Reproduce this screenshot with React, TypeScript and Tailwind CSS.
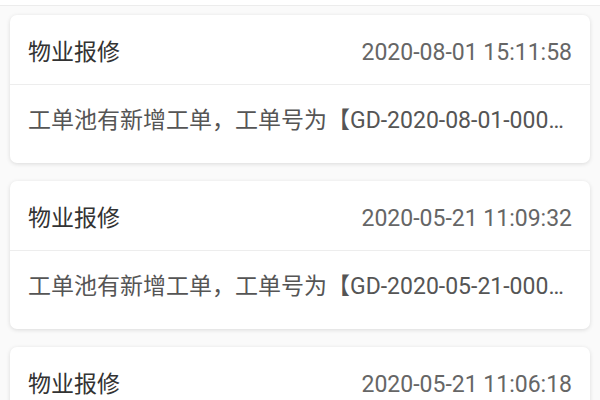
const notices = [
  {
    id: 1,
    title: "物业报修",
    time: "2020-08-01 15:11:58",
    content: "工单池有新增工单，工单号为【GD-2020-08-01-0001】，请及时处理",
  },
  {
    id: 2,
    title: "物业报修",
    time: "2020-05-21 11:09:32",
    content: "工单池有新增工单，工单号为【GD-2020-05-21-0002】，请及时处理",
  },
  {
    id: 3,
    title: "物业报修",
    time: "2020-05-21 11:06:18",
    content: "工单池有新增工单，工单号为【GD-2020-05-21-0001】，请及时处理",
  },
];

export default function App() {
  return (
    <div
      className="h-[400px] w-[600px] overflow-hidden bg-[#fafafa]"
      style={{ fontFamily: '"Roboto", "Noto Sans CJK SC", sans-serif' }}
    >
      <div className="h-[6px] border-b border-[#ececec] bg-white" />
      <div className="flex flex-col gap-[18px] px-[10px] pt-[9px]">
        {notices.map((notice) => (
          <div
            key={notice.id}
            className="shrink-0 overflow-hidden rounded-[7px] bg-white shadow-[0_1px_4px_rgba(0,0,0,0.13)]"
          >
            <div className="flex h-[70px] items-center justify-between border-b border-[#ededed] px-[18px] pt-[8px]">
              <span className="text-[23px] text-[#333]">{notice.title}</span>
              <span className="text-[23px] text-[#666]">{notice.time}</span>
            </div>
            <div className="flex h-[78px] items-center px-[18px] pb-[6px]">
              <p className="truncate text-[23px] text-[#555]">
                {notice.content}
              </p>
            </div>
          </div>
        ))}
      </div>
    </div>
  );
}
